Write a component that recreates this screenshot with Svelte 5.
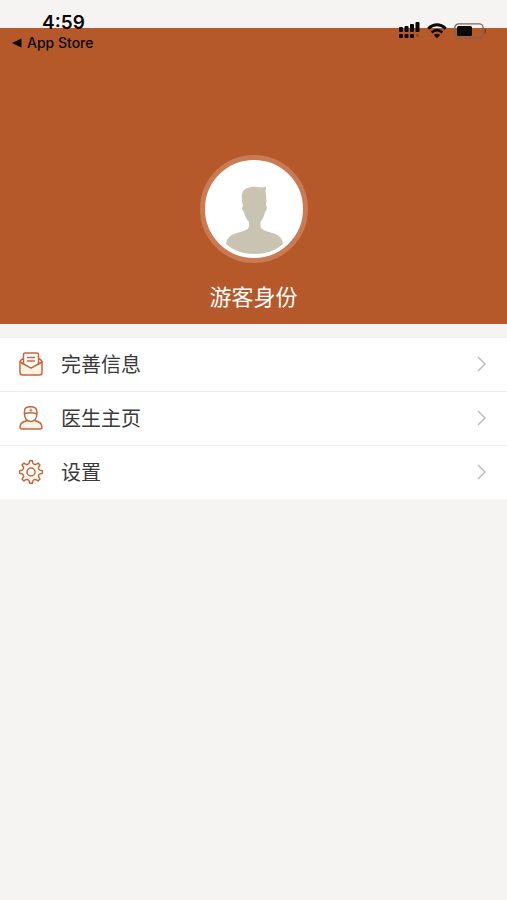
<script>
	const items = [
		{ icon: 'mail', label: '完善信息' },
		{ icon: 'doctor', label: '医生主页' },
		{ icon: 'gear', label: '设置' }
	];

	// outline of the settings cog: eight teeth around the centre
	function gearPath(teeth, outer, inner) {
		const step = (Math.PI * 2) / teeth;
		const at = (r, a) => `${(12 + r * Math.sin(a)).toFixed(2)} ${(12 - r * Math.cos(a)).toFixed(2)}`;
		let d = '';
		for (let i = 0; i < teeth; i++) {
			const a = i * step;
			d += `${i ? 'L' : 'M'}${at(outer, a - 0.12)} L${at(outer, a + 0.12)} `;
			d += `L${at(inner + 0.8, a + 0.2)} Q${at(inner - 0.9, a + step / 2)} ${at(inner + 0.8, a + step - 0.2)} `;
		}
		return d + 'Z';
	}
	const gear = gearPath(8, 11.4, 8.4);
</script>

<div class="page">
	<div class="status">
		<div class="left">
			<span class="time">4:59</span>
			<a class="back" href="#store">
				<svg width="10" height="10" viewBox="0 0 10 10"><path d="M0 5 9.500.5v9z" /></svg>
				App Store
			</a>
		</div>
		<div class="right">
			<svg width="21" height="17" viewBox="0 0 21 17">
				<rect x="0" y="5" width="4" height="5" rx="1" />
				<rect x="5.5" y="4" width="4" height="6" rx="1" />
				<rect x="11" y="2" width="4" height="8" rx="1" />
				<rect x="16.5" y="0" width="4" height="10" rx="1" />
				<rect x="0" y="12" width="4" height="4" rx="1" />
				<rect x="5.5" y="12" width="4" height="4" rx="1" />
				<rect x="11" y="12" width="4" height="4" rx="1" />
				<rect x="17" y="12" width="3" height="3" rx="1" opacity=".2" />
			</svg>
			<svg width="20" height="16" viewBox="0 0 20 16">
				<g fill="none" stroke="#0b0907" stroke-width="2.8">
					<path d="M1.2 5.6Q10-2 18.8 5.6" />
					<path d="M4.6 9.5Q10 4.8 15.4 9.5" />
				</g>
				<path d="M10 15.2 6.9 12Q10 9.5 13.1 12z" />
			</svg>
			<svg width="33" height="16" viewBox="0 0 33 16">
				<rect x=".8" y=".8" width="28.4" height="14.4" rx="4" fill="none" stroke="#7d6655" stroke-width="1.3" />
				<rect x="3" y="3" width="15" height="10" rx="1.5" />
				<path d="M30.6 5q2.800 3 0 6z" fill="#6f381c" />
			</svg>
		</div>
	</div>

	<header>
		<div class="avatar">
			<svg viewBox="0 0 98 98">
				<path
					fill="#c9c4b2"
					d="M38 46C35 34 38 29 43 28c4-2 7-1 10-1 3 1 6 0 8 0 0 3-1 4 0 8 .500 4 .500 8 0 11 1.500 0 1 5-1 6-1 5-3 8-4.500 10v4c0 4 6 5 12 7 7 2 10 6 10.500 11C70 91 60 94 49.500 94S29 91 21 84c1-6 4-9 11-11 6-2 12-3 12-7v-4c-2-2-4-5-5-10-2-1-2.500-6-1-6z"
				/>
			</svg>
		</div>
		<h1>游客身份</h1>
	</header>

	<nav>
		{#each items as item (item.icon)}
			<button>
				<svg class="icon" viewBox="0 0 24 24">
					{#if item.icon === 'mail'}
						<path fill="#fff3e6" d="M4.500 6.500 2 8Q1 8.700 1 10v10.500Q1 23 3.500 23h17q2.500 0 2.500-2.500V10q0-1.300-1-2l-2.500-1.500" />
						<path fill="#fff" d="M4.500 12V2.500Q4.500 1 6 1h12q1.500 0 1.500 1.500V12L12 16.200z" />
						<path d="m1.200 10 3.300 2M22.800 10l-3.300 2M8.500 5.500h7M8.500 9h7" />
					{:else if item.icon === 'doctor'}
						<path fill="#fff3e6" d="M8.500 14.500C3.500 15.500 1 18 1 21q0 2 2 2h18q2 0 2-2c0-3-2.500-5.500-7.500-6.500" />
						<path fill="#fff" d="M5.500 5Q5.500.8 11.500.8T17.800 5v3c0 5-3 7.500-6.200 7.500S5.500 13 5.500 8z" />
						<path d="M5.500 7.700q6-1.800 12.300 0" />
						<path stroke-width="1" d="M10.700 4.200h2.400M11.900 3v2.400" />
					{:else}
						<path fill="#fffaf5" d={gear} />
						<circle cx="12" cy="12" r="4" fill="#fff" />
					{/if}
				</svg>
				<span class="label">{item.label}</span>
				<svg class="arrow" viewBox="0 0 9 16"><path d="m1 1 7 7-7 7" /></svg>
			</button>
		{/each}
	</nav>
</div>

<style>
	:global(body) {
		background: #f5f4f2;
	}
	.page {
		position: relative;
		padding-top: 28px;
		font-family: 'Inter', 'Noto Sans CJK SC', sans-serif;
	}
	.status {
		position: absolute;
		top: 0;
		left: 0;
		right: 0;
		display: flex;
		justify-content: space-between;
		padding: 12px 20px 0 12px;
		color: #0b0907;
	}
	.status svg {
		fill: #0b0907;
	}
	.left {
		display: flex;
		flex-direction: column;
	}
	.time {
		padding-left: 30px;
		font-size: 19px;
		font-weight: 600;
		line-height: 22px;
	}
	.back {
		display: flex;
		align-items: center;
		gap: 5px;
		color: inherit;
		font-size: 14px;
		font-weight: 500;
		line-height: 18px;
		text-decoration: none;
	}
	.right {
		display: flex;
		align-items: center;
		align-self: flex-start;
		gap: 7px;
		padding-top: 10px;
	}
	header {
		display: flex;
		flex-direction: column;
		align-items: center;
		padding: 127px 0 11px;
		background: #b5592a;
	}
	.avatar {
		width: 98px;
		height: 98px;
		border: 5px solid #c97b54;
		border-radius: 50%;
		background: #fff;
	}
	.avatar svg {
		display: block;
	}
	h1 {
		margin: 18px 0 0;
		color: #fff;
		font-size: 22px;
		font-weight: 400;
		line-height: 32px;
	}
	nav {
		margin-top: 13px;
		border-top: 1px solid #efeeec;
		background: #fff;
	}
	button {
		display: flex;
		align-items: center;
		width: 100%;
		height: 54px;
		padding: 0 21px 2px 19px;
		border: none;
		border-bottom: 1px solid #f0efee;
		background: none;
		color: #3a3a3a;
		font: inherit;
		font-size: 20px;
		text-align: left;
		cursor: pointer;
	}
	button:last-child {
		height: 53px;
		border-bottom: none;
	}
	.label {
		flex: 1;
	}
	.icon {
		width: 24px;
		height: 24px;
		margin-right: 18px;
		fill: none;
		stroke: #c4683c;
		stroke-width: 1.5;
		stroke-linejoin: round;
		stroke-linecap: round;
	}
	.arrow {
		width: 9px;
		height: 16px;
		fill: none;
		stroke: #bdbdbd;
		stroke-width: 1.5;
	}
</style>
